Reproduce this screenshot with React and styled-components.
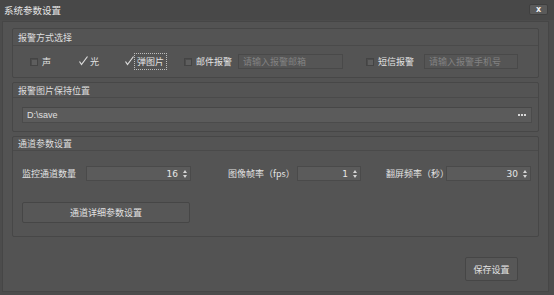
import React, { useState } from 'react'
import styled, { createGlobalStyle } from 'styled-components'

const GlobalStyle = createGlobalStyle`
  html, body {
    margin: 0;
    padding: 0;
    background: #4a4a4a;
  }
  * { box-sizing: border-box; }
`

const Window = styled.div`
  width: 554px;
  height: 295px;
  display: flex;
  flex-direction: column;
  background: #4c4c4c;
  font-family: "Noto Sans CJK SC", "Liberation Sans", sans-serif;
  font-size: 9px;
  color: #e2e2e2;
`

const TitleBar = styled.div`
  height: 20px;
  display: flex;
  align-items: center;
  justify-content: space-between;
  padding: 0 6px 0 4px;
  background: #484848;
`

const Title = styled.span`
  font-size: 9.5px;
  color: #e6e6e6;
`

const CloseButton = styled.button`
  width: 19px;
  height: 11px;
  padding: 0;
  margin-top: -1px;
  border: 1px solid #3f3f3f;
  border-radius: 2px;
  background: #5a5a5a;
  color: #f0f0f0;
  font-family: "DejaVu Sans", sans-serif;
  font-weight: bold;
  font-size: 8px;
  line-height: 9px;
  cursor: pointer;
`

const Frame = styled.div`
  flex: 1;
  margin: 1px 5px 3px 2px;
  border: 1px solid #464646;
  background: #535353;
  display: flex;
  flex-direction: column;
  padding: 6px 9px 10px 9px;
  gap: 4px;
`

const Group = styled.div`
  border: 1px solid #474747;
  border-radius: 2px;
  background: #545454;
  display: flex;
  flex-direction: column;
`

const GroupHeader = styled.div`
  height: ${p => p.$h || 16}px;
  display: flex;
  align-items: center;
  padding-left: 5px;
  border-bottom: 1px solid #4a4a4a;
  color: #dedede;
`

const GroupBody = styled.div`
  padding: ${p => p.$pad};
  display: flex;
  flex-direction: column;
  gap: ${p => p.$gap || 0}px;
`

const Row = styled.div`
  display: flex;
  align-items: center;
`

const CheckItem = styled.label`
  width: ${p => p.$w}px;
  display: flex;
  align-items: center;
  cursor: pointer;
`

const Box = styled.span`
  width: 8px;
  height: 8px;
  margin-right: 4px;
  border: 1px solid #444;
  background: #5e5e5e;
  box-shadow: inset 1px 1px 0 #4c4c4c;
`

const CheckMark = styled.svg`
  width: 9px;
  height: 10px;
  margin-right: 2px;
  margin-top: -2px;
`

const Focused = styled.span`
  outline: 1px dotted #bdbdbd;
  outline-offset: 1px;
  padding: 0 1px;
`

const TextInput = styled.input`
  width: ${p => p.$w}px;
  height: 15px;
  margin-right: ${p => p.$mr || 0}px;
  padding: 0 4px;
  border: 1px solid #494949;
  background: #555555;
  color: #e2e2e2;
  font-family: inherit;
  font-size: 9px;
  outline: none;
  &::placeholder { color: #828282; }
`

const PathField = styled.div`
  height: 16px;
  display: flex;
  align-items: center;
  justify-content: space-between;
  padding: 0 5px 0 4px;
  border: 1px solid #4b4b4b;
  border-top-color: #474747;
  background: #5b5b5b;
  font-family: "Liberation Sans", sans-serif;
  font-size: 9px;
  color: #e0e0e0;
`

const Dots = styled.span`
  display: flex;
  gap: 1px;
`

const Dot = styled.span`
  width: 2px;
  height: 2px;
  background: #d8d8d8;
`

const Label = styled.span`
  width: ${p => p.$w}px;
  white-space: nowrap;
`

const Spin = styled.div`
  width: ${p => p.$w}px;
  height: 15px;
  margin-right: ${p => p.$mr || 0}px;
  display: flex;
  align-items: center;
  justify-content: flex-end;
  padding-right: 3px;
  border: 1px solid #4a4a4a;
  background: #5b5b5b;
`

const SpinValue = styled.span`
  font-family: "DejaVu Sans", sans-serif;
  font-size: 9px;
  color: #e6e6e6;
  margin-right: 5px;
`

const Arrows = styled.span`
  display: flex;
  flex-direction: column;
  gap: 2px;
`

const Tri = styled.span`
  width: 0;
  height: 0;
  border-left: 2.5px solid transparent;
  border-right: 2.5px solid transparent;
  ${p => p.$up ? 'border-bottom: 3px solid #d6d6d6;' : 'border-top: 3px solid #d6d6d6;'}
`

const Button = styled.button`
  width: ${p => p.$w}px;
  height: ${p => p.$h}px;
  border: 1px solid #464646;
  border-radius: 2px;
  background: #575757;
  color: #e2e2e2;
  font-family: inherit;
  font-size: 9px;
  cursor: pointer;
`

const Footer = styled.div`
  flex: 1;
  display: flex;
  align-items: flex-end;
  justify-content: flex-end;
  padding-right: 21px;
`

const SpinBox = ({ value, w, mr }) => (
  <Spin $w={w} $mr={mr}>
    <SpinValue>{value}</SpinValue>
    <Arrows><Tri $up /><Tri /></Arrows>
  </Spin>
)

const Tick = () => (
  <CheckMark viewBox="0 0 9 10">
    <polyline points="0.5,5.5 2.5,8.5 8.5,0.5" fill="none" stroke="#dcdcdc" strokeWidth="1.2" />
  </CheckMark>
)

export default function App() {
  const [checks, setChecks] = useState({ sound: false, light: true, popup: true, mail: false, sms: false })
  const toggle = k => () => setChecks({ ...checks, [k]: !checks[k] })
  const mark = k => checks[k] ? <Tick /> : <Box />

  return (
    <Window>
      <GlobalStyle />
      <TitleBar>
        <Title>系统参数设置</Title>
        <CloseButton>x</CloseButton>
      </TitleBar>
      <Frame>
        <Group>
          <GroupHeader $h={17}>报警方式选择</GroupHeader>
          <GroupBody $pad="8px 0 8px 17px">
            <Row>
              <CheckItem $w={49} onClick={toggle('sound')}>{mark('sound')}声</CheckItem>
              <CheckItem $w={46} onClick={toggle('light')}>{mark('light')}光</CheckItem>
              <CheckItem $w={59} onClick={toggle('popup')}>{mark('popup')}<Focused>弹图片</Focused></CheckItem>
              <CheckItem $w={54} onClick={toggle('mail')}>{mark('mail')}邮件报警</CheckItem>
              <TextInput $w={105} $mr={23} placeholder="请输入报警邮箱" />
              <CheckItem $w={58} onClick={toggle('sms')}>{mark('sms')}短信报警</CheckItem>
              <TextInput $w={94} placeholder="请输入报警手机号" />
            </Row>
          </GroupBody>
        </Group>
        <Group>
          <GroupHeader $h={15}>报警图片保持位置</GroupHeader>
          <GroupBody $pad="9px 6px 8px 9px">
            <PathField>
              <span>D:\save</span>
              <Dots><Dot /><Dot /><Dot /></Dots>
            </PathField>
          </GroupBody>
        </Group>
        <Group>
          <GroupHeader $h={14}>通道参数设置</GroupHeader>
          <GroupBody $pad="15px 0 13px 9px" $gap={21}>
            <Row>
              <Label $w={64}>监控通道数量</Label>
              <SpinBox value="16" w={105} mr={37} />
              <Label $w={69}>图像帧率（fps）</Label>
              <SpinBox value="1" w={64} mr={25} />
              <Label $w={60}>翻屏频率（秒）</Label>
              <SpinBox value="30" w={85} />
            </Row>
            <Button $w={168} $h={21}>通道详细参数设置</Button>
          </GroupBody>
        </Group>
        <Footer>
          <Button $w={53} $h={24}>保存设置</Button>
        </Footer>
      </Frame>
    </Window>
  )
}
